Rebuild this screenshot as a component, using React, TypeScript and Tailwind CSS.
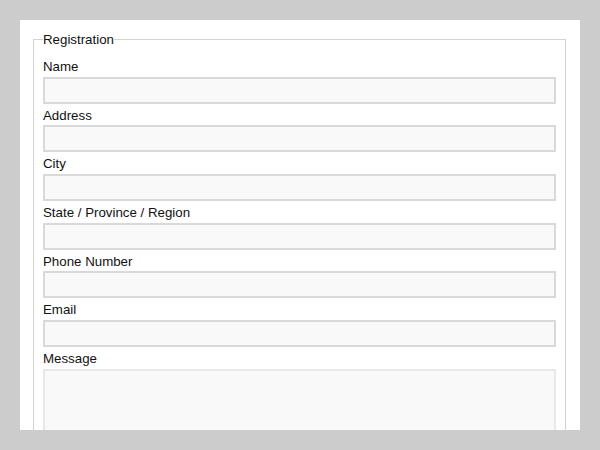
import React from 'react';

const fields = ['Name', 'Address', 'City', 'State / Province / Region', 'Phone Number', 'Email'];

export default function App() {
  return (
    <div className="h-[450px] w-[600px] bg-[#cccccc] p-5 font-['Liberation_Sans',Arial,sans-serif]">
      <div className="h-full overflow-hidden bg-white pl-[13px] pr-[14px] pt-[10px]">
        <fieldset className="border border-[#d3d3d3] px-[9px] pb-4">
          <legend className="text-[13.3px] leading-[19px] text-[#111]">Registration</legend>
          <div className="mt-[6px] flex flex-col">
            {fields.map((f) => (
              <div key={f} className="flex flex-col">
                <label className="h-[21.67px] text-[13.3px] leading-[24px] text-[#111]">{f}</label>
                <input
                  type="text"
                  className="h-[27px] w-full border-2 border-[#d9d9d9] bg-[#f9f9f9] outline-none"
                />
              </div>
            ))}
            <label className="h-[21.67px] text-[13.3px] leading-[24px] text-[#111]">Message</label>
            <textarea className="h-[120px] w-full resize-none border-2 border-[#e8e8e8] bg-[#f9f9f9] outline-none" />
          </div>
        </fieldset>
      </div>
    </div>
  );
}
